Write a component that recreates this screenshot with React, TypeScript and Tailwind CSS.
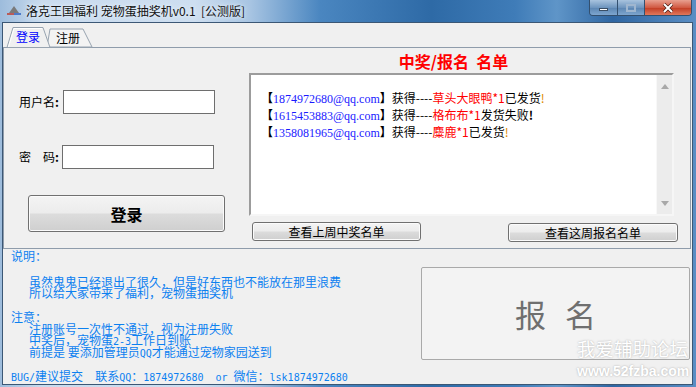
import React from "react"

const mono = "font-['DejaVu_Sans_Mono',monospace] text-[10px] leading-[10px]"

function WinButton({ className, children }: { className: string; children: React.ReactNode }) {
  return (
    <div
      className={`flex shrink-0 items-center justify-center rounded-[3px] border border-[#707070] bg-[linear-gradient(to_bottom,#f4f4f4_0%,#ececec_48%,#dcdcdc_52%,#cfcfcf_100%)] shadow-[inset_0_0_0_1px_#fbfbfb] text-black ${className}`}
    >
      {children}
    </div>
  )
}

function TitleBar() {
  return (
    <div className="relative flex h-[22px] shrink-0 items-center">
      {/* app icon */}
      <svg width="16" height="12" viewBox="0 0 16 12" className="ml-[4px]">
        <polygon points="8,1 13,8 3,8" fill="#7a7a7a" />
        <line x1="1" y1="9" x2="8" y2="9" stroke="#c0392b" strokeWidth="1.5" />
        <line x1="8" y1="9" x2="15" y2="9" stroke="#2c5fbf" strokeWidth="1.5" />
      </svg>
      <span className="ml-[4px] whitespace-pre text-[12px] leading-[14px] text-[#111] [text-shadow:0_0_6px_#e8f1fa,0_0_3px_#e8f1fa]">
        洛克王国福利 宠物蛋抽奖机v0.1  [公测版]
      </span>

      {/* caption buttons */}
      <div className="absolute right-[1px] top-0 flex h-[16px] overflow-hidden rounded-b-[4px] border border-t-0 border-[#33506f]">
        <div className="flex w-[27px] items-end justify-center bg-[linear-gradient(to_bottom,#a8c3de,#6f96bf_50%,#5a84b1_51%,#7ea6cf)] pb-[4px]">
          <div className="h-[3px] w-[9px] border border-[#3a4f66] bg-white" />
        </div>
        <div className="flex w-[27px] items-center justify-center border-l border-[#33506f] bg-[linear-gradient(to_bottom,#a8c3de,#6f96bf_50%,#5a84b1_51%,#7ea6cf)]">
          <div className="h-[8px] w-[10px] border-2 border-[#9fb6cf]" />
        </div>
        <div className="flex w-[47px] items-center justify-center border-l border-[#33506f] bg-[linear-gradient(to_bottom,#e8a090,#d15a43_50%,#c13b22_51%,#e0785c)]">
          <svg width="12" height="10" viewBox="0 0 12 10">
            <path d="M2 1 L10 9 M10 1 L2 9" stroke="#4a1a12" strokeWidth="3.4" />
            <path d="M2 1 L10 9 M10 1 L2 9" stroke="#ffffff" strokeWidth="2" />
          </svg>
        </div>
      </div>
    </div>
  )
}

function TabHeader() {
  return (
    <div className="relative h-[21px] w-[688px] shrink-0">
      <svg width="100" height="22" className="absolute left-0 top-0">
        <polygon points="44,21 47,3 80,3 89,21" fill="#f3f3f3" stroke="#97a3b0" strokeWidth="1" />
        <polygon points="4,21.5 10,1.5 40,1.5 47,21.5" fill="#f0f0f0" stroke="#97a3b0" strokeWidth="1" />
        <polyline points="5.5,21 11,2.5 39,2.5" fill="none" stroke="#ffffff" strokeWidth="1" />
      </svg>
      <div className="relative flex pt-[5px] text-[12px] leading-[12px]">
        <span className="ml-[13px] text-[#0000ff]">登录</span>
        <span className="ml-[16px] mt-[1px] text-black">注册</span>
      </div>
    </div>
  )
}

function ScrollArrow({ up }: { up: boolean }) {
  return (
    <svg width="8" height="5" viewBox="0 0 8 5">
      <polygon points={up ? "4,0 8,5 0,5" : "0,0 8,0 4,5"} fill="#a8a8a8" />
    </svg>
  )
}

function Winners() {
  const email = "font-['Liberation_Serif',serif] text-[#1a1aff]"
  return (
    <div className="flex h-[143px] w-[425px] border-2 border-t-[#9c9c9c] border-l-[#9c9c9c] border-r-[#f6f6f6] border-b-[#f6f6f6] bg-white">
      <div className="flex-1 pl-[10px] pt-[15px] text-[12px] leading-[16px] text-black">
        <div>
          <span className="font-bold">【</span>
          <span className={email}>1874972680@qq.com</span>
          <span className="font-bold">】</span>获得----<span className="text-[#ff0000]">草头大眼鸭*1</span>已发货<span className="text-[#e08a00]">!</span>
        </div>
        <div>
          <span className="font-bold">【</span>
          <span className={email}>1615453883@qq.com</span>
          <span className="font-bold">】</span>获得----<span className="text-[#ff0000]">格布布*1</span>发货失败<span className="font-bold">!</span>
        </div>
        <div>
          <span className="font-bold">【</span>
          <span className={email}>1358081965@qq.com</span>
          <span className="font-bold">】</span>获得----<span className="text-[#ff0000]">麋鹿*1</span>已发货<span className="text-[#e08a00]">!</span>
        </div>
      </div>
      <div className="flex w-[16px] flex-col items-center justify-between border-l border-[#f8f8f8] bg-[#ececec] pb-[8px] pt-[9px]">
        <ScrollArrow up />
        <ScrollArrow up={false} />
      </div>
    </div>
  )
}

export default function App() {
  return (
    <div className="relative flex h-[387px] w-[696px] flex-col overflow-hidden bg-[linear-gradient(to_right,#9dbcdc_0%,#c9dbee_6%,#cddef0_28%,#a7c4e2_36%,#4a86c0_46%,#2e6aa6_62%,#3f7cb8_74%,#5f95c8_80%,#2f66a2_88%,#5a8ec4_100%)] pb-[2px] pl-[2px] pr-[3px] font-['Noto_Sans_CJK_SC',sans-serif]">
      <TitleBar />

      <div className="flex min-h-0 flex-1 flex-col overflow-hidden border border-[#3b5775] bg-[#f0f0f0]">
        {/* tab control */}
        <div className="mt-[3px] flex shrink-0 flex-col">
          <TabHeader />
          <div className="flex h-[202px] w-[688px] shrink-0 border border-[#8f9cab]">
            {/* login form */}
            <div className="flex w-[245px] flex-col pt-[42px]">
              <div className="flex h-[24px] items-center">
                <span className="ml-[15px] w-[44px] text-[12px] text-black">
                  用户名<span className="font-bold">:</span>
                </span>
                <div className="h-[24px] w-[152px] border border-[#6e6e6e] bg-white" />
              </div>
              <div className="mt-[31px] flex h-[24px] items-center">
                <span className="ml-[15px] flex w-[43px] text-[12px] text-black">
                  密<span className="ml-[12px]">码</span>
                  <span className="font-bold">:</span>
                </span>
                <div className="h-[24px] w-[152px] border border-[#6e6e6e] bg-white" />
              </div>
              <WinButton className="ml-[24px] mt-[26px] h-[37px] w-[197px] text-[16px] font-semibold">登录</WinButton>
            </div>

            {/* winners list */}
            <div className="flex flex-col">
              <div className="mt-[2px] h-[22px] w-[409px] text-center text-[16px] font-bold leading-[22px] text-[#ff0000]">
                中奖/报名&nbsp; 名单
              </div>
              <div className="mt-[1px]">
                <Winners />
              </div>
              <div className="mt-[6px] flex items-start">
                <WinButton className="ml-[3px] h-[19px] w-[169px] text-[12px]">查看上周中奖名单</WinButton>
                <WinButton className="ml-[87px] mt-[1px] h-[19px] w-[170px] text-[12px]">查看这周报名名单</WinButton>
              </div>
            </div>
          </div>
        </div>

        {/* notes + sign-up */}
        <div className="flex min-h-0 flex-1 justify-between">
          <div className="pl-[8px] pt-[1px] text-[12px] leading-[12px] text-[#0c80f0]">
            <div className="h-[12px]">说明：</div>
            <div className="mt-[14px] h-[12px] pl-[18px]">虽然鬼鬼已经退出了很久，但是好东西也不能放在那里浪费</div>
            <div className="mt-[-1px] h-[12px] pl-[18px]">所以给大家带来了福利，宠物蛋抽奖机</div>
            <div className="mt-[12px] h-[12px]">注意：</div>
            <div className="h-[12px] pl-[18px]">注册账号一次性不通过，视为注册失败</div>
            <div className="mt-[-1px] h-[12px] pl-[18px]">
              中奖后，宠物蛋<span className={mono}>2-3</span>工作日到账
            </div>
            <div className="h-[12px] pl-[18px]">
              前提是 要添加管理员<span className={mono}>QQ</span>才能通过宠物家园送到
            </div>
            <div className="mt-[12px] h-[12px] whitespace-pre">
              <span className={mono}>BUG/</span>建议提交<span className={mono}>  </span>联系<span className={mono}>QQ</span>：<span className={mono}>1874972680  or </span>微信：<span className={mono}>lsk1874972680</span>
            </div>
          </div>

          <div className="mr-[2px] mt-[18px] flex h-[93px] w-[269px] shrink-0 items-center justify-center rounded-[2px] border border-[#a9a9a9] bg-[#f3f3f3]">
            <span className="text-[31px] leading-[32px] text-[#6f6f6f]">
              报<span className="ml-[19px]">名</span>
            </span>
          </div>
        </div>
      </div>

      {/* forum watermark */}
      <div className="pointer-events-none absolute left-[577px] top-[338px] flex flex-col items-start text-white [text-shadow:0_0_2px_rgba(120,120,120,0.6)]">
        <span className="text-[18.5px] leading-[20px]">我爱辅助论坛</span>
        <span className="mt-[6px] font-['Liberation_Sans',sans-serif] text-[14px] font-bold leading-[15px]">www.52fzba.com</span>
      </div>
    </div>
  )
}
